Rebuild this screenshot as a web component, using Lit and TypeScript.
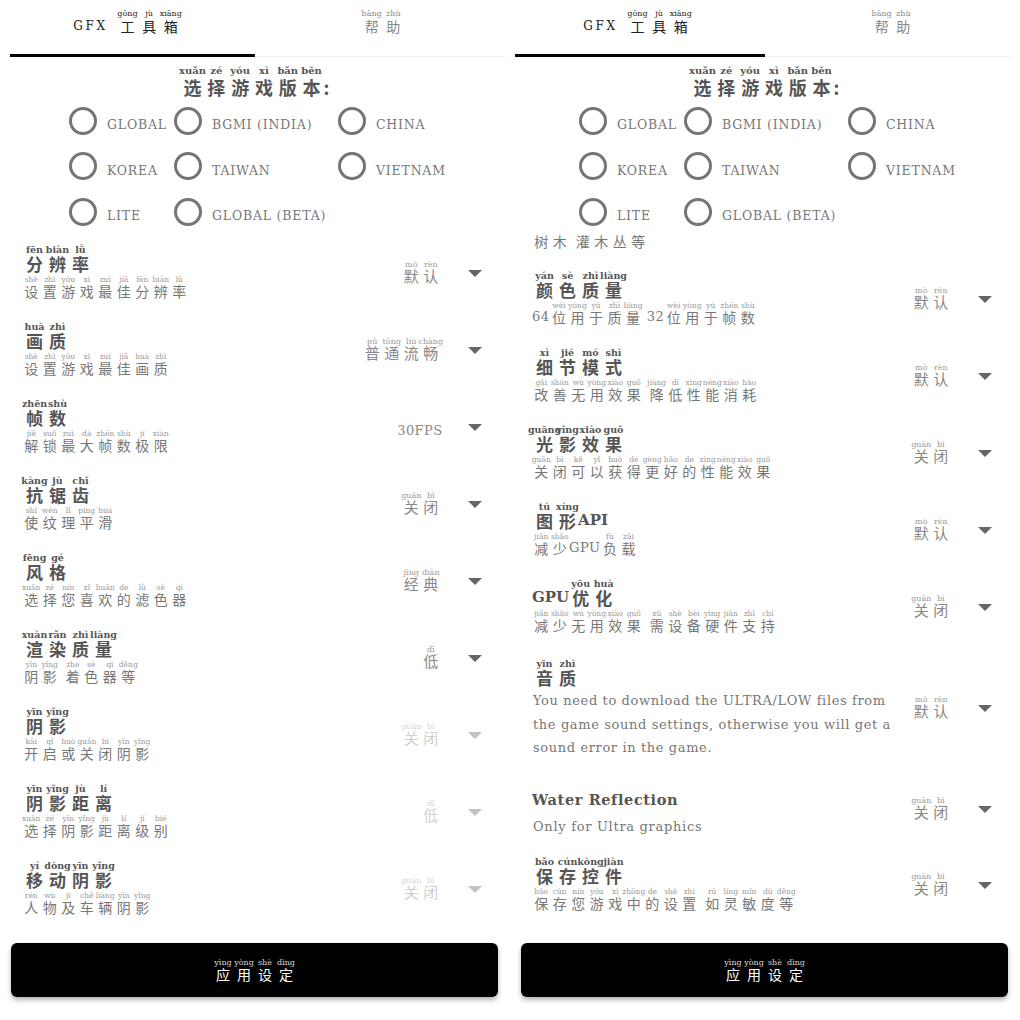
import { LitElement, html, css, nothing } from "lit";
import { customElement } from "lit/decorators.js";

type RowData = {
  title: string;
  sub?: string;
  para?: string;
  value?: string;
  off?: boolean;
  plain?: boolean;
};

const LEFT: RowData[] = [
  { title: "分:fēn 辨:biàn 率:lǜ", sub: "设:shè 置:zhì 游:yóu 戏:xì 最:zuì 佳:jiā 分:fēn 辨:biàn 率:lǜ", value: "默:mò 认:rèn" },
  { title: "画:huà 质:zhì", sub: "设:shè 置:zhì 游:yóu 戏:xì 最:zuì 佳:jiā 画:huà 质:zhì", value: "普:pǔ 通:tōng 流:liú 畅:chàng" },
  { title: "帧:zhēn 数:shù", sub: "解:jiě 锁:suǒ 最:zuì 大:dà 帧:zhēn 数:shù 极:jí 限:xiàn", value: "30FPS" },
  { title: "抗:kàng 锯:jù 齿:chǐ", sub: "使:shǐ 纹:wén 理:lǐ 平:píng 滑:huá", value: "关:guān 闭:bì" },
  { title: "风:fēng 格:gé", sub: "选:xuǎn 择:zé 您:nín 喜:xǐ 欢:huān 的:de 滤:lǜ 色:sè 器:qì", value: "经:jīng 典:diǎn" },
  { title: "渲:xuàn 染:rǎn 质:zhì 量:liàng", sub: "阴:yīn 影:yǐng _ 着:zhe 色:sè 器:qì 等:děng", value: "低:dī" },
  { title: "阴:yīn 影:yǐng", sub: "开:kāi 启:qǐ 或:huò 关:guān 闭:bì 阴:yīn 影:yǐng", value: "关:guān 闭:bì", off: true },
  { title: "阴:yīn 影:yǐng 距:jù 离:lí", sub: "选:xuǎn 择:zé 阴:yīn 影:yǐng 距:jù 离:lí 级:jí 别:bié", value: "低:dī", off: true },
  { title: "移:yí 动:dòng 阴:yīn 影:yǐng", sub: "人:rén 物:wù 及:jí 车:chē 辆:liàng 阴:yīn 影:yǐng", value: "关:guān 闭:bì", off: true },
];

const RIGHT: RowData[] = [
  { title: "颜:yán 色:sè 质:zhì 量:liàng", sub: "64 位:wèi 用:yòng 于:yú 质:zhì 量:liàng _ 32 位:wèi 用:yòng 于:yú 帧:zhēn 数:shù", value: "默:mò 认:rèn" },
  { title: "细:xì 节:jié 模:mó 式:shì", sub: "改:gǎi 善:shàn 无:wú 用:yòng 效:xiào 果:guǒ _ 降:jiàng 低:dī 性:xìng 能:néng 消:xiāo 耗:hào", value: "默:mò 认:rèn" },
  { title: "光:guāng 影:yǐng 效:xiào 果:guǒ", sub: "关:guān 闭:bì 可:kě 以:yǐ 获:huò 得:dé 更:gèng 好:hǎo 的:de 性:xìng 能:néng 效:xiào 果:guǒ", value: "关:guān 闭:bì" },
  { title: "图:tú 形:xíng API", sub: "减:jiǎn 少:shǎo GPU 负:fù 载:zǎi", value: "默:mò 认:rèn" },
  { title: "GPU 优:yōu 化:huà", sub: "减:jiǎn 少:shǎo 无:wú 用:yòng 效:xiào 果:guǒ _ 需:xū 设:shè 备:bèi 硬:yìng 件:jiàn 支:zhī 持:chí", value: "关:guān 闭:bì" },
  { title: "音:yīn 质:zhì", para: "You need to download the ULTRA/LOW files from the game sound settings, otherwise you will get a sound error in the game.", value: "默:mò 认:rèn" },
  { title: "Water Reflection", plain: true, para: "Only for Ultra graphics", value: "关:guān 闭:bì" },
  { title: "保:bǎo 存:cún 控:kòng 件:jiàn", sub: "保:bǎo 存:cún 您:nín 游:yóu 戏:xì 中:zhōng 的:de 设:shè 置:zhì _ 如:rú 灵:líng 敏:mǐn 度:dù 等:děng", value: "关:guān 闭:bì" },
];

const REGIONS = ["GLOBAL", "BGMI (INDIA)", "CHINA", "KOREA", "TAIWAN", "VIETNAM", "LITE", "GLOBAL (BETA)"];

function ruby(text: string) {
  return text.split(" ").map((tok) => {
    if (tok === "_") return html`<span class="gap"></span>`;
    const i = tok.indexOf(":");
    if (i < 0) return html`<span class="latin">${tok}</span>`;
    return html`<span class="c"><span class="py">${tok.slice(i + 1)}</span><span class="ch">${tok.slice(0, i)}</span></span>`;
  });
}

@customElement("app-panel")
class AppPanel extends LitElement {
  static properties = {
    rows: { attribute: false },
    side: { type: String },
    lead: { type: String },
  };
  rows: RowData[] = [];
  side = "left";
  lead = "";

  static styles = css`
    :host {
      display: flex;
      flex-direction: column;
      width: 510px;
      height: 1020px;
      font-family: "DejaVu Serif", "Noto Sans CJK SC", serif;
      color: #777;
      overflow: hidden;
    }
    .c {
      display: inline-flex;
      flex-direction: column;
      align-items: center;
      white-space: nowrap;
    }
    .py, .ch { display: block; white-space: nowrap; }
    .ch { font-family: "Noto Sans CJK SC", sans-serif; }
    .line { display: flex; align-items: flex-end; white-space: nowrap; }

    .tabs { display: grid; grid-template-columns: 255px 255px; height: 54px; }
    .tab { display: flex; justify-content: center; align-items: flex-start; padding-top: 8px; color: #888; }
    .tab.on { color: #222; }
    .tab .c { width: 21.7px; }
    .tab .py { font-size: 8px; line-height: 11px; }
    .tab .ch { font-size: 14px; line-height: 15px; }
    .tab .latin { font-size: 12px; line-height: 15px; letter-spacing: 2.6px; margin: 11px 9px 0 0; }
    .track { display: flex; align-items: flex-end; height: 3px; }
    .bar { height: 3px; background: #000; }
    .rest { flex: 1; height: 1px; background: #eee; }
    .left .track { margin: 0 5px 0 10px; }
    .left .bar { width: 245px; }
    .right .track { margin: 0 10px 0 5px; }
    .right .bar { width: 250px; }

    .heading { display: flex; justify-content: center; align-items: flex-end; margin: 8px 0 1px; color: #555; font-weight: 700; }
    .heading .c { width: 23.8px; }
    .heading .py { font-size: 10px; line-height: 12px; }
    .heading .ch { font-size: 18px; line-height: 20px; }
    .heading .latin { font-family: "Noto Sans CJK SC", sans-serif; font-size: 18px; line-height: 20px; }

    .radios {
      display: grid;
      grid-template-columns: 105px 164px auto;
      grid-auto-rows: 45.5px;
      margin: 0 0 -4px 69px;
      flex: none;
      font-size: 12.5px;
      letter-spacing: 0.8px;
      color: #777;
    }
    .radio { display: flex; align-items: center; gap: 10px; white-space: nowrap; }
    .radio span + span { padding-top: 8px; }
    .dot { width: 22px; height: 22px; border: 3px solid #757575; border-radius: 50%; flex: none; }

    .list { flex: 1; min-height: 0; overflow: hidden; padding-top: 4px; }
    .row { display: flex; align-items: center; padding-left: 23px; height: 77px; }
    .row.para { height: 126px; }
    .row.plain { height: 75px; }
    .lead.lead { height: 26px; padding-left: 23px; align-items: flex-start; }
    .info { flex: 1; min-width: 0; padding-bottom: 6px; }
    .row.para .info { padding: 1px 0 0; }
    .row.plain .info { padding: 10px 0 0; }

    .title { color: #555; font-weight: 700; margin-bottom: 4px; }
    .title .c { width: 23px; }
    .title .py { font-size: 9.5px; line-height: 12px; }
    .title .ch { font-size: 17px; line-height: 15px; }
    .title .latin { font-size: 15px; line-height: 15px; margin-left: -1px; }
    .title.plainhead { font-size: 14.5px; line-height: 22px; letter-spacing: 0.6px; margin: 0 0 0 -1px; white-space: nowrap; }

    .sub { margin-left: -1px; }
    .sub .c { width: 18.5px; }
    .sub .py { font-size: 7.5px; line-height: 10px; color: #999; }
    .sub .ch { font-size: 14px; line-height: 12px; }
    .sub .latin { font-size: 13px; line-height: 12px; letter-spacing: 0.6px; }
    .sub .gap { width: 4.5px; flex: none; }

    .para-text { font-size: 13px; line-height: 23.7px; width: 358px; margin: 3px 0 0 0; letter-spacing: 0.62px; }
    .plain .para-text { margin-top: 4px; letter-spacing: 0.7px; }

    .value { display: flex; justify-content: flex-end; align-items: flex-end; color: #888; margin: 0 27px 6px 0; white-space: nowrap; }
    .value .c { width: 19.5px; }
    .value .py { font-size: 8px; line-height: 11px; color: #999; }
    .value .ch { font-size: 15px; line-height: 12px; }
    .value .latin { font-size: 13px; line-height: 15px; letter-spacing: 0.4px; padding-top: 13px; margin-right: -2px; }
    .arrow {
      width: 0; height: 0; flex: none;
      border-left: 7px solid transparent;
      border-right: 7px solid transparent;
      border-top: 7px solid #666;
      margin-right: 28.5px;
    }
    .off .value, .off .arrow { opacity: 0.4; }

    .apply {
      flex: none;
      display: flex;
      justify-content: center;
      align-items: center;
      height: 54px;
      margin: 13px 12px 23px 11px;
      padding: 0 0 4px;
      background: #000;
      border: 0;
      border-radius: 6px;
      box-shadow: 0 3px 5px rgba(0, 0, 0, 0.3);
      color: #fff;
      font-family: inherit;
    }
    .apply .c { width: 21px; }
    .apply .py { font-size: 8px; line-height: 11px; color: #ddd; }
    .apply .ch { font-size: 14px; line-height: 12px; }
  `;

  renderRow(r: RowData) {
    const cls = `row${r.off ? " off" : ""}${r.para && !r.plain ? " para" : ""}${r.plain ? " plain" : ""}`;
    return html`<div class=${cls}>
      <div class="info">
        ${r.plain
          ? html`<div class="title plainhead">${r.title}</div>`
          : html`<div class="title line">${ruby(r.title)}</div>`}
        ${r.sub ? html`<div class="sub line">${ruby(r.sub)}</div>` : nothing}
        ${r.para ? html`<div class="para-text">${r.para}</div>` : nothing}
      </div>
      <div class="value">${ruby(r.value ?? "")}</div>
      <span class="arrow"></span>
    </div>`;
  }

  render() {
    return html`<div class=${this.side} style="display:contents">
      <div class="tabs">
        <div class="tab on"><span class="latin">GFX</span>${ruby("工:gōng 具:jù 箱:xiāng")}</div>
        <div class="tab">${ruby("帮:bāng 助:zhù")}</div>
      </div>
      <div class="track"><div class="bar"></div><div class="rest"></div></div>
      <div class="heading">${ruby("选:xuǎn 择:zé 游:yóu 戏:xì 版:bǎn 本:běn")}<span class="latin">:</span></div>
      <div class="radios">
        ${REGIONS.map((r) => html`<div class="radio"><span class="dot"></span><span>${r}</span></div>`)}
      </div>
      <div class="list">
        ${this.lead ? html`<div class="lead sub line">${this.lead.split(" ").map((w, i) => html`${i ? html`<span class="gap"></span>` : nothing}${[...w].map((ch) => html`<span class="c"><span class="ch">${ch}</span></span>`)}`)}</div>` : nothing}
        ${this.rows.map((r) => this.renderRow(r))}
      </div>
      <button class="apply">${ruby("应:yìng 用:yòng 设:shè 定:dìng")}</button>
    </div>`;
  }
}

@customElement("app-root")
class AppRoot extends LitElement {
  static styles = css`
    :host {
      display: flex;
      width: 1020px;
      height: 1020px;
      background: #fff;
      overflow: hidden;
    }
  `;
  render() {
    return html`
      <app-panel .rows=${LEFT} side="left"></app-panel>
      <app-panel .rows=${RIGHT} side="right" lead="树木 灌木丛等"></app-panel>
    `;
  }
}
